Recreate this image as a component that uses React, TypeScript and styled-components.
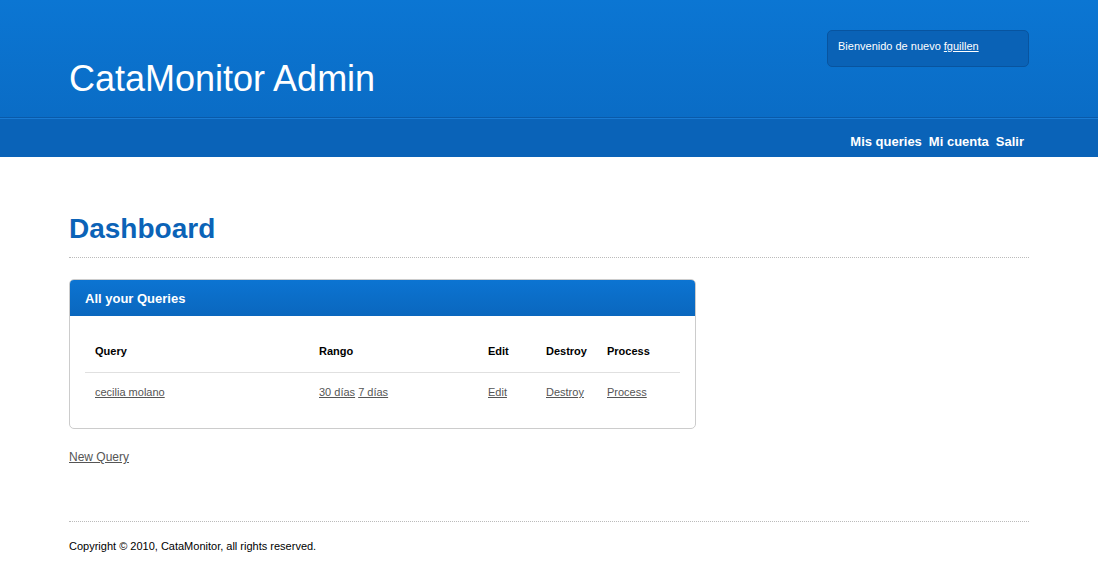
import React from "react";
import styled, { createGlobalStyle } from "styled-components";

const Global = createGlobalStyle`
  html, body {
    margin: 0;
    padding: 0;
    background: #fff;
    font-family: "Liberation Sans", Arial, Helvetica, sans-serif;
    color: #000;
  }
  a {
    color: #555;
  }
`;

const Header = styled.header`
  background: linear-gradient(to bottom, #0b76d3 0%, #0a69c1 100%);
`;

const TopBand = styled.div`
  border-bottom: 1px solid #0a5aa9;
`;

const Top = styled.div`
  width: 960px;
  margin: 0 auto;
  height: 117px;
  display: flex;
  justify-content: space-between;
  align-items: flex-start;
`;

const Logo = styled.h1`
  margin: 59px 0 0;
  font-size: 36px;
  font-weight: normal;
  color: #fff;
  line-height: 40px;
`;

const Welcome = styled.div`
  margin-top: 30px;
  width: 202px;
  height: 37px;
  box-sizing: border-box;
  padding: 9px 10px 0;
  background: #0a62b6;
  border: 1px solid #08549f;
  border-radius: 5px;
  color: #fff;
  font-size: 11px;
  a {
    color: #fff;
  }
`;

const NavBar = styled.nav`
  border-top: 1px solid #1a7bd4;
  background: #0a63b8;
  height: 38px;
`;

const NavInner = styled.div`
  width: 960px;
  margin: 0 auto;
  display: flex;
  justify-content: flex-end;
  align-items: center;
  height: 100%;
  padding-right: 5px;
  box-sizing: border-box;
  gap: 7px;
`;

const NavLink = styled.a`
  color: #fff;
  font-weight: bold;
  font-size: 13px;
  text-decoration: none;
  margin-top: 7px;
`;

const Main = styled.main`
  width: 960px;
  margin: 0 auto;
`;

const Title = styled.h2`
  margin: 55px 0 0;
  font-size: 28px;
  line-height: 34px;
  color: #0b63b7;
  font-weight: bold;
  padding-bottom: 11px;
  border-bottom: 1px dotted #bbb;
`;

const Box = styled.section`
  margin-top: 21px;
  width: 625px;
  border: 1px solid #ccc;
  border-radius: 5px;
  overflow: hidden;
`;

const BoxHead = styled.div`
  height: 36px;
  background: linear-gradient(to bottom, #0c74d2, #0a67be);
  color: #fff;
  font-weight: bold;
  font-size: 13px;
  display: flex;
  align-items: center;
  padding-left: 15px;
`;

const BoxBody = styled.div`
  padding: 15px 15px 17px;
`;

const Table = styled.table`
  width: 595px;
  border-collapse: collapse;
  font-size: 11px;
  line-height: 14px;
  th {
    text-align: left;
    font-weight: bold;
    padding: 13px 0 14px 10px;
    border-bottom: 1px solid #e0e0e0;
  }
  td {
    padding: 12px 0 12px 10px;
  }
`;

const NewLink = styled.a`
  display: block;
  width: fit-content;
  margin-top: 21px;
  font-size: 12px;
  line-height: 14px;
`;

const Footer = styled.footer`
  width: 960px;
  margin: 57px auto 0;
  border-top: 1px dotted #bbb;
  padding-top: 18px;
  font-size: 11px;
  line-height: 13px;
`;

const cols = ["224px", "169px", "58px", "61px", "auto"];

export default function App() {
  return (
    <>
      <Global />
      <Header>
        <TopBand>
          <Top>
            <Logo>CataMonitor Admin</Logo>
            <Welcome>
              Bienvenido de nuevo <a href="#">fguillen</a>
            </Welcome>
          </Top>
        </TopBand>
        <NavBar>
          <NavInner>
            <NavLink href="#">Mis queries</NavLink>
            <NavLink href="#">Mi cuenta</NavLink>
            <NavLink href="#">Salir</NavLink>
          </NavInner>
        </NavBar>
      </Header>
      <Main>
        <Title>Dashboard</Title>
        <Box>
          <BoxHead>All your Queries</BoxHead>
          <BoxBody>
            <Table>
              <colgroup>
                {cols.map((w, i) => (
                  <col key={i} style={{ width: w }} />
                ))}
              </colgroup>
              <thead>
                <tr>
                  <th>Query</th>
                  <th>Rango</th>
                  <th>Edit</th>
                  <th>Destroy</th>
                  <th>Process</th>
                </tr>
              </thead>
              <tbody>
                <tr>
                  <td>
                    <a href="#">cecilia molano</a>
                  </td>
                  <td>
                    <a href="#">30 días</a> <a href="#">7 días</a>
                  </td>
                  <td>
                    <a href="#">Edit</a>
                  </td>
                  <td>
                    <a href="#">Destroy</a>
                  </td>
                  <td>
                    <a href="#">Process</a>
                  </td>
                </tr>
              </tbody>
            </Table>
          </BoxBody>
        </Box>
        <NewLink href="#">New Query</NewLink>
      </Main>
      <Footer>Copyright © 2010, CataMonitor, all rights reserved.</Footer>
    </>
  );
}
